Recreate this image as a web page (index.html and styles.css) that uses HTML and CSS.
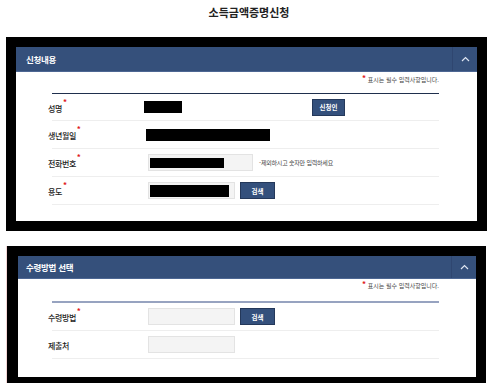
FILE: index.html
```html
<!DOCTYPE html>
<html lang="ko">
<head>
<meta charset="utf-8">
<title>소득금액증명신청</title>
<link rel="stylesheet" href="styles.css">
</head>
<body>
<h1 class="title">소득금액증명신청</h1>

<section class="frame frame-one">
  <div class="panel">
    <div class="panel-head">
      <span class="panel-title">신청내용</span>
      <span class="toggle"><svg width="9" height="6" viewBox="0 0 9 6"><path d="M1 5 L4.5 1.5 L8 5" fill="none" stroke="#dfe6f2" stroke-width="1.2"/></svg></span>
    </div>
    <div class="panel-body body-one">
      <p class="note"><span class="req">*</span> 표시는 필수 입력사항입니다.</p>
      <div class="table table-dark">
        <div class="row">
          <div class="label">성명<span class="req">*</span></div>
          <div class="value">
            <span class="mask mask-name"></span>
            <button class="btn btn-applicant">신청인</button>
          </div>
        </div>
        <div class="row">
          <div class="label">생년월일<span class="req">*</span></div>
          <div class="value"><span class="mask mask-birth"></span></div>
        </div>
        <div class="row">
          <div class="label">전화번호<span class="req">*</span></div>
          <div class="value">
            <span class="input input-phone"><span class="mask mask-phone"></span></span>
            <span class="hint">-제외하시고 숫자만 입력하세요</span>
          </div>
        </div>
        <div class="row">
          <div class="label">용도<span class="req">*</span></div>
          <div class="value">
            <span class="input input-use"><span class="mask mask-use"></span></span>
            <button class="btn btn-search">검색</button>
          </div>
        </div>
      </div>
    </div>
  </div>
</section>

<section class="frame frame-two">
  <div class="panel">
    <div class="panel-head head-two">
      <span class="panel-title">수령방법 선택</span>
      <span class="toggle"><svg width="9" height="6" viewBox="0 0 9 6"><path d="M1 5 L4.5 1.5 L8 5" fill="none" stroke="#dfe6f2" stroke-width="1.2"/></svg></span>
    </div>
    <div class="panel-body body-two">
      <p class="note"><span class="req">*</span> 표시는 필수 입력사항입니다.</p>
      <div class="table table-light">
        <div class="row">
          <div class="label">수령방법<span class="req">*</span></div>
          <div class="value">
            <span class="input input-use"></span>
            <button class="btn btn-search">검색</button>
          </div>
        </div>
        <div class="row">
          <div class="label">제출처</div>
          <div class="value"><span class="input input-use"></span></div>
        </div>
      </div>
    </div>
  </div>
</section>
</body>
</html>
```

FILE: styles.css
```css
* { box-sizing: border-box; }
html, body { margin: 0; padding: 0; background: #fff; }
body {
  font-family: "Noto Sans CJK KR", "Noto Sans", sans-serif;
  color: #333;
  overflow: hidden;
  height: 383px;
}
.title {
  margin: 0;
  padding-top: 4px;
  height: 37px;
  text-align: center;
  font-size: 11px;
  line-height: 16px;
  font-weight: 700;
  color: #222;
  padding-left: 2px;
}
.frame {
  background: #000;
  padding: 10px;
}
.frame-one {
  margin-left: 6px;
  width: 481px;
}
.frame-two {
  margin-top: 15px;
  margin-left: 7px;
  width: 479px;
  padding: 10px 10px 10px 11px;
  box-shadow: -1px 0 0 #f3d6d6;
}
.panel { background: #fff; }
.panel-head {
  display: flex;
  align-items: stretch;
  height: 25px;
  background: #35507b;
  border-bottom: 1px solid #4d6793;
}
.head-two { height: 23px; }
.panel-title {
  flex: 1;
  padding-left: 10px;
  color: #fff;
  font-size: 8.5px;
  font-weight: 700;
  letter-spacing: -0.3px;
  display: flex;
  align-items: center;
}
.head-two .panel-title { padding-left: 8px; }
.toggle {
  width: 25px;
  border-left: 1px solid #2f4670;
  display: flex;
  align-items: center;
  justify-content: center;
}
.panel-body { padding: 0 38px 16px 36px; }
.body-two { padding: 0 37px 18px 34px; }
.note {
  margin: 0;
  padding-top: 3px;
  height: 21px;
  text-align: right;
  font-size: 6px;
  line-height: 10px;
  color: #444;
}
.body-two .note { height: 22px; padding-top: 2px; }
.req {
  color: #e01b1b;
  font-weight: 700;
  font-size: 8px;
  vertical-align: top;
  line-height: 6px;
}
.table { border-top: 1px solid #1f2f4d; }
.table-light { border-top: 2px solid #97a3c0; }
.row {
  display: flex;
  align-items: center;
  height: 28px;
  border-bottom: 1px solid #eeeeee;
}
.table-dark .row:first-child { height: 27px; }
.label {
  width: 100px;
  margin-left: -4px;
  padding-right: 4px;
  font-size: 8px;
  font-weight: 500;
  letter-spacing: -0.4px;
  color: #222;
  display: flex;
  align-items: flex-start;
  gap: 1px;
  padding-top: 2px;
}
.label .req { margin-top: -4px; }
.value {
  flex: 1;
  display: flex;
  align-items: center;
  height: 100%;
}
.mask { display: block; background: #000; }
.mask-name { width: 38px; height: 12px; margin-left: -4px; }
.mask-birth { width: 124px; height: 12px; margin-left: -2px; }
.input {
  display: block;
  background: #f4f4f4;
  border: 1px solid #e3e3e3;
  position: relative;
}
.input-phone { width: 105px; height: 17px; padding: 3px 0 0 1px; }
.input-use { width: 87px; height: 17px; padding: 2px 0 0 1px; }
.mask-phone { width: 74px; height: 10px; }
.mask-use { width: 79px; height: 12px; }
.hint {
  margin-left: 6px;
  font-size: 6px;
  color: #444;
  letter-spacing: -0.2px;
}
.btn {
  font-family: inherit;
  background: #34507c;
  color: #fff;
  border: 1px solid #24385a;
  font-size: 6.5px;
  font-weight: 700;
  padding: 0;
  height: 17px;
  cursor: pointer;
}
.btn-applicant { width: 33px; margin-left: 130px; }
.btn-search { width: 35px; margin-left: 5px; }
```
